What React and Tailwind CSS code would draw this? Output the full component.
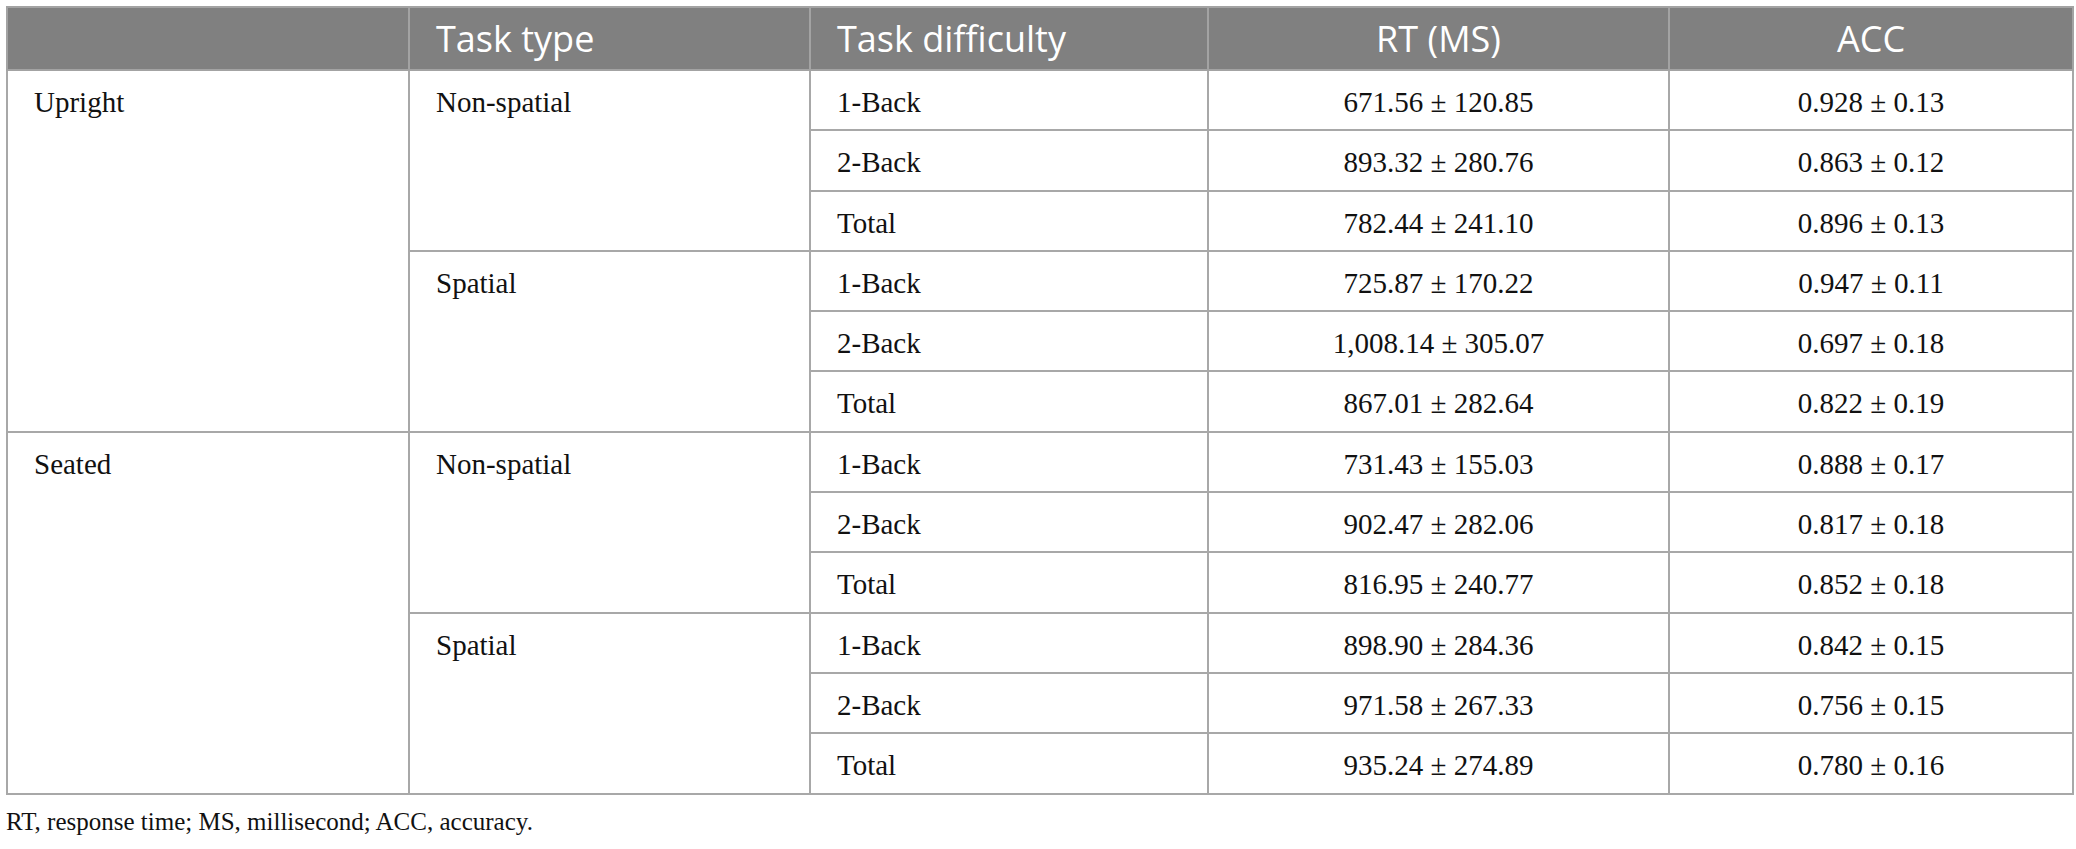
import React from "react";

const groups = [
  {
    posture: "Upright",
    tasks: [
      {
        type: "Non-spatial",
        rows: [
          ["1-Back", "671.56 ± 120.85", "0.928 ± 0.13"],
          ["2-Back", "893.32 ± 280.76", "0.863 ± 0.12"],
          ["Total", "782.44 ± 241.10", "0.896 ± 0.13"],
        ],
      },
      {
        type: "Spatial",
        rows: [
          ["1-Back", "725.87 ± 170.22", "0.947 ± 0.11"],
          ["2-Back", "1,008.14 ± 305.07", "0.697 ± 0.18"],
          ["Total", "867.01 ± 282.64", "0.822 ± 0.19"],
        ],
      },
    ],
  },
  {
    posture: "Seated",
    tasks: [
      {
        type: "Non-spatial",
        rows: [
          ["1-Back", "731.43 ± 155.03", "0.888 ± 0.17"],
          ["2-Back", "902.47 ± 282.06", "0.817 ± 0.18"],
          ["Total", "816.95 ± 240.77", "0.852 ± 0.18"],
        ],
      },
      {
        type: "Spatial",
        rows: [
          ["1-Back", "898.90 ± 284.36", "0.842 ± 0.15"],
          ["2-Back", "971.58 ± 267.33", "0.756 ± 0.15"],
          ["Total", "935.24 ± 274.89", "0.780 ± 0.16"],
        ],
      },
    ],
  },
];

const cell = "border-2 border-[#a8a8a8] h-[60.3px] px-[26px] pt-[4px] pb-0 leading-[54px] align-top";
const head = "border-2 border-[#a3a3a3] h-[63px] px-[26px] py-0 font-normal";

export default function App() {
  return (
    <div className="bg-white min-h-screen pl-[6px] pt-[6px] text-[#111] font-['Liberation_Serif',serif]">
      <table className="table-fixed border-collapse w-[2066px] text-[29px]">
        <colgroup>
          <col className="w-[402px]" />
          <col className="w-[401px]" />
          <col className="w-[398px]" />
          <col className="w-[461px]" />
          <col className="w-[404px]" />
        </colgroup>
        <thead>
          <tr className="bg-[#808080] text-white font-['Open_Sans',sans-serif] text-[36px] leading-[40px]">
            <th className={`${head} text-left`} />
            <th className={`${head} text-left`}>Task type</th>
            <th className={`${head} text-left`}>Task difficulty</th>
            <th className={`${head} text-center`}>RT (MS)</th>
            <th className={`${head} text-center`}>ACC</th>
          </tr>
        </thead>
        <tbody>
          {groups.map((g) =>
            g.tasks.map((t, ti) =>
              t.rows.map((r, ri) => (
                <tr key={g.posture + t.type + r[0]}>
                  {ti === 0 && ri === 0 && (
                    <td rowSpan={6} className={cell}>{g.posture}</td>
                  )}
                  {ri === 0 && (
                    <td rowSpan={3} className={cell}>{t.type}</td>
                  )}
                  <td className={cell}>{r[0]}</td>
                  <td className={`${cell} text-center`}>{r[1]}</td>
                  <td className={`${cell} text-center`}>{r[2]}</td>
                </tr>
              ))
            )
          )}
        </tbody>
      </table>
      <p className="mt-[12px] text-[25px] leading-[30px]">
        RT, response time; MS, millisecond; ACC, accuracy.
      </p>
    </div>
  );
}
